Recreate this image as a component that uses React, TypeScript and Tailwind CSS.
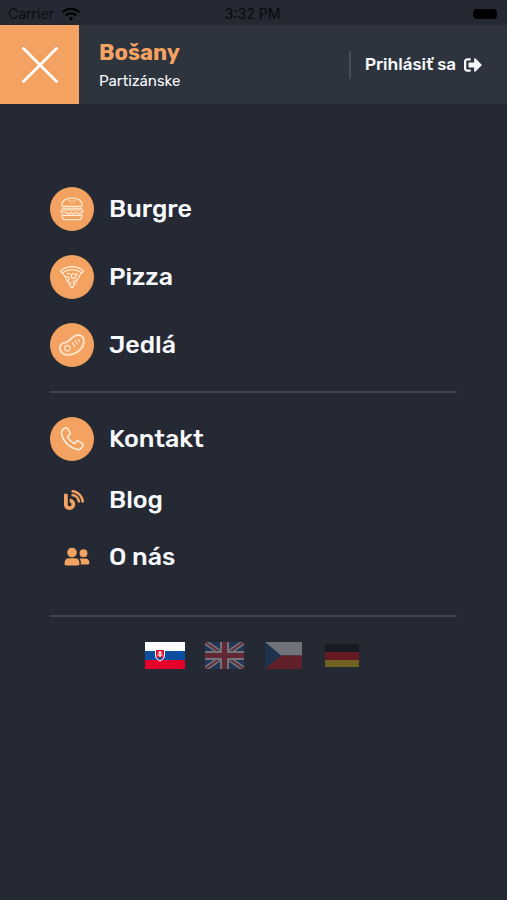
import type { ReactNode } from 'react'
import { FaBlog, FaSignOutAlt, FaWifi } from 'react-icons/fa'

function BurgerIcon() {
  return (
    <svg viewBox="0 0 24 24" className="size-6" fill="none" stroke="#ffeedd" strokeWidth="1.1" strokeLinecap="round" strokeLinejoin="round">
      <path d="M1.8 8.400C1.800 4 6 1 12 1s10.200 3 10.200 7.400c0 .6-.4 1-1 1H2.800c-.6 0-1-.4-1-1Z" />
      <path d="M9 3.600h.2M12 3.200h.2M15 3.600h.2M10.600 5.200h.2M13.600 5.200h.2" />
      <path d="M2.400 11.200h19.200M1.800 13h20.400c.6 0 .9.500.9 1s-.3 1.200-.9 1.200h-1.400l-2 2-2.400-2-2.600 1.600-2.400-1.600-2.400 1.800-2.600-1.800H1.800c-.6 0-.9-.6-.9-1.200s.3-1 .9-1Z" />
      <path d="M2.200 16.800v2c0 2.200 1.400 4 3.400 4h12.800c2 0 3.400-1.800 3.400-4v-2M2.400 18.400h19.200" />
    </svg>
  )
}

function PizzaIcon() {
  return (
    <svg viewBox="0 0 24 24" className="size-6" fill="none" stroke="#ffeedd" strokeWidth="1.1" strokeLinecap="round" strokeLinejoin="round">
      <path d="M.9 5.400C7.500.400 16.500.400 23.100 5.400c.3.300.3.700.1 1l-1.200 1.500c-6-4.200-14-4.200-20 0L.8 6.400c-.2-.3-.2-.7.1-1Z" />
      <path d="M2.600 7.700 11.300 22.400c.3.600 1.100.6 1.400 0l8.700-14.700" />
      <circle cx="13.500" cy="11" r="2.300" />
      <path d="M5.200 11.800c2-.9 4 .2 4 2s-1.200 2.600-2.400 2.200M16.800 15c-2-.3-3.600.6-3.600 2.100 0 .9.500 1.600 1.200 1.900M7 8.200c.4 1.300 2.200 1.500 3 .2M17 8.300l-.4 1.500M10.900 17.500v1" />
    </svg>
  )
}

function SteakIcon() {
  return (
    <svg viewBox="0 0 28 24" className="h-6 w-7" fill="none" stroke="#ffe2c8" strokeLinecap="round" strokeLinejoin="round">
      <path strokeWidth="2" d="M3.200 11.400c2.300-2.500 5.200-1 8.400-4.200 2.600-2.700 5.200-5.400 9.200-5.200 3.600.2 5.200 3.100 5 6.600-.3 5.900-6.200 12.200-14.400 13.100-4.400.5-8.100-1.400-9.100-4.800-.6-2.100-.3-4.100.9-5.500Z" />
      <circle cx="9.400" cy="15.200" r="2.700" strokeWidth="1.400" />
      <path strokeWidth="1.300" d="m14.400 9.800 2.200 3.800M17.200 7.800l1.800 3.200M20.200 6.400l1.100 2.200" />
    </svg>
  )
}

function PhoneIcon() {
  return (
    <svg viewBox="0 0 24 24" className="size-6" fill="none" stroke="#ffeedd" strokeWidth="1.5" strokeLinecap="round" strokeLinejoin="round">
      <path d="M3.600 2 5 1.100c.9-.5 1.900-.2 2.500.6l2.400 3.700c.5.900.3 1.900-.5 2.500l-1.200.9c-.6.5-.7 1.200-.3 1.900 1.500 2.500 3.100 4.100 5.500 5.500.7.400 1.400.3 1.900-.3l.9-1.200c.6-.8 1.700-1 2.500-.5l3.600 2.400c.8.600 1.100 1.600.6 2.500l-1 1.600c-.9 1.500-2.600 2.200-4.600 1.800C9.600 20.900 3.300 14.600 1.600 7.100 1.200 5 2 3 3.600 2Z" />
    </svg>
  )
}

function PeopleIcon() {
  return (
    <svg viewBox="0 0 26 20" className="w-[26px]" fill="currentColor">
      <circle cx="8" cy="5.500" r="4.800" />
      <circle cx="19.500" cy="6.200" r="3.900" />
      <path d="M.6 17v-1.600c0-2.600 2-4.200 4.400-4.200h6c2.400 0 4.400 1.600 4.400 4.200V17c0 .9-.7 1.500-1.500 1.500H2.100c-.8 0-1.500-.6-1.500-1.500Z" />
      <path d="M16.800 17.500v-2.300c0-1.400-.5-2.600-1.400-3.500.5-.2 1-.3 1.600-.3h4.400c2.200 0 3.900 1.500 3.900 3.600v1.300c0 .7-.5 1.200-1.200 1.200z" />
    </svg>
  )
}

function SlovakFlag() {
  return (
    <svg viewBox="0 0 40 27" className="w-10">
      <path fill="#fff" d="M0 0h40v9H0z" />
      <path fill="#0b4ea2" d="M0 9h40v9H0z" />
      <path fill="#e4002b" d="M0 18h40v9H0z" />
      <path fill="#fff" d="M10 7h10v6c0 3.200-2 5-5 6.400-3-1.400-5-3.200-5-6.400z" />
      <path fill="#e4102f" d="M11 8h8v5c0 2.600-1.600 4.100-4 5.200-2.400-1.100-4-2.600-4-5.200z" />
      <path fill="#fff" d="M14.400 9h1.200v1.200h1.300v1h-1.300v1.300h2v1.100h-2v2h-1.200v-2h-2v-1.100h2v-1.300h-1.300v-1h1.300z" />
      <path fill="#0b4ea2" d="M12.100 16c.7-.9 1.400-.8 1.800-.3.600-.8 1.600-.8 2.200 0 .4-.5 1.100-.6 1.800.3-.7.900-1.700 1.600-2.900 2.200-1.200-.6-2.200-1.300-2.900-2.200z" />
    </svg>
  )
}

function BritishFlag() {
  return (
    <svg viewBox="0 0 39 27" className="w-[39px]">
      <path fill="#254a9b" d="M0 0h39v27H0z" />
      <path stroke="#fff" strokeWidth="5" d="m0 0 39 27M39 0 0 27" />
      <path stroke="#d5283c" strokeWidth="1.8" d="m0 0 39 27M39 0 0 27" />
      <path stroke="#fff" strokeWidth="9" d="M19.500 0v27M0 13.500h39" />
      <path stroke="#d5283c" strokeWidth="5" d="M19.500 0v27M0 13.500h39" />
    </svg>
  )
}

function CzechFlag() {
  return (
    <svg viewBox="0 0 37 27" className="w-[37px]">
      <path fill="#fff" d="M0 0h37v13.500H0z" />
      <path fill="#d7141a" d="M0 13.500h37V27H0z" />
      <path fill="#11457e" d="m0 0 16 13.500L0 27z" />
    </svg>
  )
}

function GermanFlag() {
  return (
    <svg viewBox="0 0 34 23" className="w-[34px]">
      <path fill="#000" d="M0 0h34v8H0z" />
      <path fill="#dd0000" d="M0 8h34v8H0z" />
      <path fill="#ffce00" d="M0 16h34v7H0z" />
    </svg>
  )
}

function MenuLink({ icon, label, round = false }: { icon: ReactNode; label: string; round?: boolean }) {
  return (
    <li>
      <a href="#" className={`flex items-center gap-[15px] text-[25px] font-medium leading-8 ${round ? 'h-11' : 'h-[37px]'}`}>
        <span className={`flex size-11 shrink-0 items-center ${round ? 'justify-center rounded-full bg-[#f4a261]' : 'pl-3.5 text-[#f4a261]'}`}>
          {icon}
        </span>
        {label}
      </a>
    </li>
  )
}

const categories = [
  { label: 'Burgre', icon: <BurgerIcon /> },
  { label: 'Pizza', icon: <PizzaIcon /> },
  { label: 'Jedlá', icon: <SteakIcon /> },
]

const languages = [
  { name: 'Slovenčina', flag: <SlovakFlag />, active: true },
  { name: 'English', flag: <BritishFlag />, active: false },
  { name: 'Čeština', flag: <CzechFlag />, active: false },
  { name: 'Deutsch', flag: <GermanFlag />, active: false },
]

export default function App() {
  return (
    <div className="min-h-screen bg-[#242933] font-['Rubik','Roboto',sans-serif] text-[#f8f9fc]">
      {/* Status bar */}
      <div className="grid h-[25px] grid-cols-3 items-center pl-2 pr-2.5 pt-0.5 font-['Inter',sans-serif] text-sm leading-5 text-[#0b0d11]">
        <div className="flex items-center gap-2">
          <span>Carrier</span>
          <FaWifi className="size-[18px] text-black" />
        </div>
        <span className="text-center font-medium">3:32 PM</span>
        <span className="h-2.5 w-6 justify-self-end rounded-sm bg-black" />
      </div>

      {/* Header */}
      <header className="flex h-[79px] items-center bg-[#2d343d]">
        <button type="button" aria-label="Zavrieť" className="flex size-[79px] shrink-0 items-center justify-center bg-[#f4a261]">
          <svg viewBox="0 0 36 36" className="size-9" stroke="#fff" strokeWidth="2.8" strokeLinecap="round">
            <path d="m1.500 1.500 33 33M34.500 1.500l-33 33" />
          </svg>
        </button>
        <div className="ml-5 pt-1">
          <p className="text-[22px] font-bold leading-7 text-[#f4a261]">Bošany</p>
          <p className="text-[15px] leading-7">Partizánske</p>
        </div>
        <a href="#" className="ml-auto mr-[25px] flex h-7 items-center gap-2 border-l-2 border-[#454c57] pl-3.5 text-[17px] font-medium">
          Prihlásiť sa
          <FaSignOutAlt className="size-[18px]" />
        </a>
      </header>

      {/* Menu */}
      <nav className="px-[50px] pt-[83px]">
        <ul className="space-y-6">
          {categories.map((item) => (
            <MenuLink key={item.label} label={item.label} icon={item.icon} round />
          ))}
        </ul>
        <hr className="my-6 border-t-2 border-[#3d444e]" />
        <ul className="space-y-5">
          <MenuLink label="Kontakt" icon={<PhoneIcon />} round />
          <MenuLink label="Blog" icon={<FaBlog className="size-5" />} />
          <MenuLink label="O nás" icon={<PeopleIcon />} />
        </ul>
        <hr className="mb-6 mt-10 border-t-2 border-[#3d444e]" />
        <div className="flex h-7 items-center justify-center gap-[19px]">
          {languages.map((lang) => (
            <button
              key={lang.name}
              type="button"
              aria-label={lang.name}
              className={`flex w-10 justify-center ${lang.active ? '' : 'opacity-35'}`}
            >
              {lang.flag}
            </button>
          ))}
        </div>
      </nav>
    </div>
  )
}
